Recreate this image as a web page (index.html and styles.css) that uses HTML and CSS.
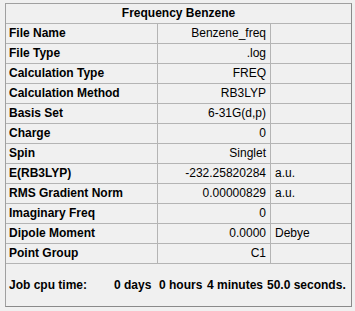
FILE: index.html
```html
<!DOCTYPE html>
<html>
<head>
<meta charset="utf-8">
<link rel="stylesheet" href="styles.css">
</head>
<body>
<div class="panel">
  <div class="title">Frequency Benzene</div>
  <div class="grid">
    <div class="lab">File Name</div><div class="val">Benzene_freq</div><div class="unit"></div>
    <div class="lab">File Type</div><div class="val">.log</div><div class="unit"></div>
    <div class="lab">Calculation Type</div><div class="val">FREQ</div><div class="unit"></div>
    <div class="lab">Calculation Method</div><div class="val">RB3LYP</div><div class="unit"></div>
    <div class="lab">Basis Set</div><div class="val">6-31G(d,p)</div><div class="unit"></div>
    <div class="lab">Charge</div><div class="val">0</div><div class="unit"></div>
    <div class="lab">Spin</div><div class="val">Singlet</div><div class="unit"></div>
    <div class="lab">E(RB3LYP)</div><div class="val">-232.25820284</div><div class="unit">a.u.</div>
    <div class="lab">RMS Gradient Norm</div><div class="val">0.00000829</div><div class="unit">a.u.</div>
    <div class="lab">Imaginary Freq</div><div class="val">0</div><div class="unit"></div>
    <div class="lab">Dipole Moment</div><div class="val">0.0000</div><div class="unit">Debye</div>
    <div class="lab">Point Group</div><div class="val">C1</div><div class="unit"></div>
  </div>
  <div class="footer">
    <span class="f-label">Job cpu time:</span>
    <span class="f-days">0 days</span>
    <span class="f-hours">0 hours</span>
    <span class="f-min">4 minutes</span>
    <span class="f-sec">50.0 seconds.</span>
  </div>
</div>
</body>
</html>
```
FILE: styles.css
```css
html, body {
  margin: 0;
  padding: 0;
  background: #f0f0f0;
}
body {
  padding: 3px 0 0 5px;
  font-family: "Liberation Sans", Arial, sans-serif;
  font-size: 12px;
  color: #000;
}
.panel {
  width: 345px;
  border: 1px solid #a0a0a0;
  border-right-color: #8a8a8a;
  border-bottom-color: #8a8a8a;
  background: #f0f0f0;
}
.title {
  height: 19px;
  line-height: 19px;
  border-bottom: 1px solid #b4b4b4;
  text-align: center;
  font-weight: bold;
}
.grid {
  display: grid;
  grid-template-columns: 152px 113px 80px;
}
.grid > div {
  height: 19px;
  line-height: 19px;
  border-bottom: 1px solid #b4b4b4;
  white-space: nowrap;
  overflow: hidden;
}
.lab {
  font-weight: bold;
  padding-left: 3px;
  border-right: 1px solid #b4b4b4;
}
.val {
  text-align: right;
  padding-right: 4px;
  border-right: 1px solid #b4b4b4;
}
.unit {
  padding-left: 4px;
}
.footer {
  height: 42px;
  display: flex;
  align-items: center;
  font-weight: bold;
  padding-left: 3px;
  white-space: nowrap;
}
.f-label { width: 105px; flex: none; }
.f-days { width: 45px; flex: none; }
.f-hours { width: 48px; flex: none; }
.f-min { width: 60px; flex: none; }
.f-sec { flex: none; }
```
